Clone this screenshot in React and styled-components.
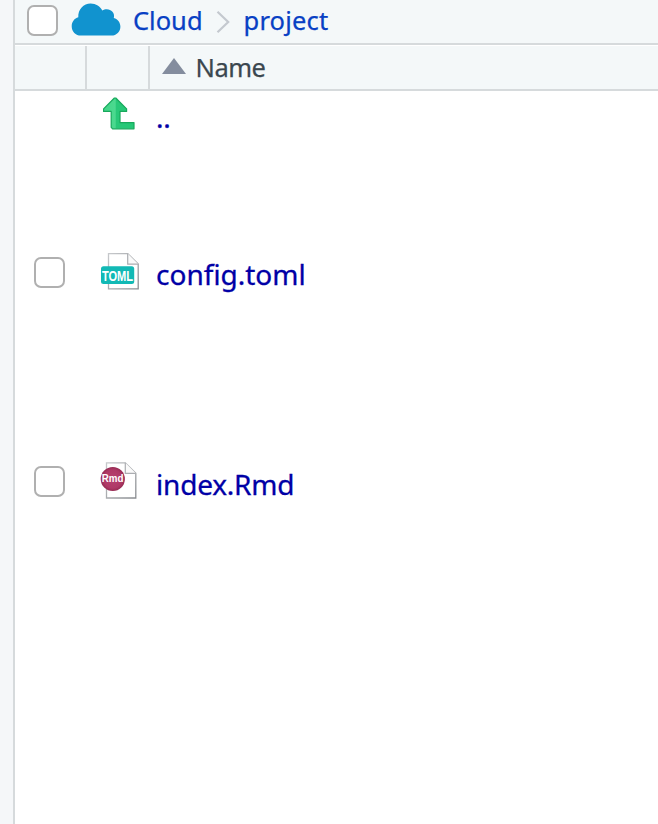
import React from "react";
import styled, { createGlobalStyle } from "styled-components";

const GlobalStyle = createGlobalStyle`
  * { box-sizing: border-box; }
  body { margin: 0; background: #fff; overflow: hidden; }
`;

const Page = styled.div`
  display: flex;
  width: 658px;
  height: 824px;
  overflow: hidden;
  font-family: "Noto Sans", "Open Sans", sans-serif;
`;

const Gutter = styled.div`
  flex: none;
  width: 15px;
  background: #f5f7f9;
  border-right: 2px solid #d6dadc;
`;

const Pane = styled.main`
  flex: 1;
  min-width: 0;
  background: #fff;
`;

const Breadcrumbs = styled.nav`
  display: flex;
  align-items: flex-start;
  height: 45px;
  padding-left: 12px;
  background: #f4f8f9;
  border-bottom: 2px solid #d6dadc;
`;

const Checkbox = styled.input`
  appearance: none;
  display: block;
  width: 31px;
  height: 31px;
  margin: ${(p) => p.$top}px 0 0 ${(p) => p.$left || 0}px;
  border: 2px solid #b0b0b0;
  border-radius: 7px;
  background: #fff;
`;

const CloudIcon = styled.svg`
  flex: none;
  width: 50px;
  height: 34px;
  margin: 3px 0 0 13px;
`;

const Crumb = styled.a`
  color: #0840c4;
  font-size: 25.5px;
  line-height: 36px;
  height: 36px;
  margin: 2px 0 0 ${(p) => p.$left}px;
  width: ${(p) => p.$width}px;
  letter-spacing: ${(p) => p.$spacing}px;
  -webkit-text-stroke: 0.25px currentColor;
  white-space: nowrap;
`;

const Chevron = styled.svg`
  flex: none;
  width: 14px;
  height: 24px;
  margin: 10px 0 0;
`;

const HeaderRow = styled.div`
  display: grid;
  grid-template-columns: 72px 63px 1fr;
  height: 46px;
  background: #f4f8f9;
  border-top: 1px solid #fff;
  border-bottom: 2px solid #d6dadc;
`;

const HeaderCell = styled.div`
  display: flex;
  border-right: ${(p) => (p.$last ? "0" : "2px solid #d6dadc")};
`;

const SortIcon = styled.svg`
  width: 24px;
  height: 16px;
  margin: 12px 0 0 12px;
`;

const HeaderLabel = styled.span`
  margin: 3px 0 0 9.5px;
  color: #3b474f;
  font-size: 25.5px;
  line-height: 36px;
  letter-spacing: -0.5px;
  -webkit-text-stroke: 0.25px currentColor;
`;

const FileRow = styled.div`
  display: grid;
  grid-template-columns: 72px 63px 1fr;
  height: ${(p) => p.$height}px;
`;

const FileIcon = styled.svg`
  display: block;
  width: 40px;
  height: 40px;
  overflow: visible;
  margin: ${(p) => p.$top}px 0 0 12px;
`;

const FileName = styled.a`
  margin: ${(p) => p.$top}px 0 0 6px;
  color: #0000a6;
  font-size: 28px;
  line-height: 40px;
  letter-spacing: ${(p) => p.$spacing || 0}px;
  -webkit-text-stroke: 0.3px currentColor;
  white-space: nowrap;
`;

function UpArrow() {
  return (
    <FileIcon $top={4} viewBox="0 0 40 40">
      <defs>
        <linearGradient id="up" x1="0" x2="1">
          <stop offset="0" stopColor="#43d588" />
          <stop offset=".38" stopColor="#4bd98f" />
          <stop offset=".42" stopColor="#28c878" />
          <stop offset="1" stopColor="#24c876" />
        </linearGradient>
      </defs>
      <path
        d="M15.4 3 L4.6 13.8 V16.4 H12.2 V32.4 L13.6 33.8 H35 V27.6 H21 V16.4 H27.6 V13.8 L16.8 3 Z"
        fill="url(#up)"
        stroke="#18a95c"
        strokeWidth="1.2"
        strokeLinejoin="round"
      />
    </FileIcon>
  );
}

function Sheet({ id, x, right, top }) {
  const fold = right - 10.5;
  return (
    <>
      <defs>
        <linearGradient id={id} x1="0" y1="0" x2="1" y2="1">
          <stop offset="0" stopColor="#c7c9cc" />
          <stop offset="1" stopColor="#898c90" />
        </linearGradient>
      </defs>
      <path
        d={`M${x} ${top} H${fold} L${right} ${top + 10.5} V${top + 35.2} H${x} Z`}
        fill="#fff"
        stroke={`url(#${id})`}
        strokeWidth="1.3"
      />
      <path
        d={`M${fold} ${top} V${top + 10.5} H${right}`}
        fill="#fafafa"
        stroke="#abadb1"
        strokeWidth="1.2"
      />
    </>
  );
}

function TomlIcon() {
  return (
    <FileIcon $top={3} viewBox="0 0 40 40">
      <Sheet id="tomlSheet" x={9.5} right={39.2} top={2.6} />
      <rect x="2" y="15.2" width="33.2" height="17.8" rx="2.5" fill="#12b9b5" />
      <text
        x="2.9"
        y="29.7"
        textLength="31.2"
        lengthAdjust="spacingAndGlyphs"
        fill="#fff"
        fontFamily="Liberation Sans, sans-serif"
        fontSize="15.5"
        fontWeight="700"
      >
        TOML
      </text>
    </FileIcon>
  );
}

function RmdIcon() {
  return (
    <FileIcon $top={3} viewBox="0 0 40 40">
      <defs>
        <radialGradient id="rmdDisc" cx=".5" cy=".5" r=".5">
          <stop offset="0" stopColor="#b74270" />
          <stop offset=".75" stopColor="#af3966" />
          <stop offset="1" stopColor="#952a52" />
        </radialGradient>
      </defs>
      <Sheet id="rmdSheet" x={7.5} right={36.8} top={2.8} />
      <circle cx="13.8" cy="19" r="12.1" fill="url(#rmdDisc)" />
      <text
        x="2.8"
        y="22.3"
        textLength="21.7"
        lengthAdjust="spacingAndGlyphs"
        fill="#fff"
        fontFamily="Liberation Sans, sans-serif"
        fontSize="10.2"
        fontWeight="700"
      >
        Rmd
      </text>
    </FileIcon>
  );
}

export default function App() {
  return (
    <Page>
      <GlobalStyle />
      <Gutter />
      <Pane>
        <Breadcrumbs>
          <Checkbox type="checkbox" $top={5} aria-label="Select all" />
          <CloudIcon viewBox="0 0 50 34">
            <path
              d="M10 32.6 C4.5 32.6 .7 28.4 .7 23.2 C.7 18.8 3.5 15.3 7.3 14.3 C6.8 6.4 12.6 .5 19.6 .5 C25 .5 29.3 3.5 31.3 7.6 C36.5 3.8 44.8 7.8 42.8 15 C47 16.2 49.4 19.8 49.4 23.8 C49.4 28.8 45.4 32.6 40.5 32.6 Z"
              fill="#1193cf"
            />
          </CloudIcon>
          <Crumb $left={12} $width={83} $spacing={0}>Cloud</Crumb>
          <Chevron viewBox="0 0 14 24" fill="none" stroke="#c4c9cf" strokeWidth="2.2">
            <path d="M1.5 1.8 L12.2 12 L1.5 22.2" />
          </Chevron>
          <Crumb $left={13.5} $width={100} $spacing={0.2}>project</Crumb>
        </Breadcrumbs>
        <HeaderRow>
          <HeaderCell />
          <HeaderCell />
          <HeaderCell $last>
            <SortIcon viewBox="0 0 24 16">
              <path d="M12 0 L24 16 H0 Z" fill="#848d9e" />
            </SortIcon>
            <HeaderLabel>Name</HeaderLabel>
          </HeaderCell>
        </HeaderRow>
        <FileRow $height={157}>
          <span />
          <UpArrow />
          <FileName $top={6} $spacing={-0.3}>..</FileName>
        </FileRow>
        <FileRow $height={209}>
          <Checkbox type="checkbox" $top={9} $left={19} aria-label="config.toml" />
          <TomlIcon />
          <FileName $top={6}>config.toml</FileName>
        </FileRow>
        <FileRow $height={209}>
          <Checkbox type="checkbox" $top={9} $left={19} aria-label="index.Rmd" />
          <RmdIcon />
          <FileName $top={7} $spacing={-0.2}>index.Rmd</FileName>
        </FileRow>
      </Pane>
    </Page>
  );
}
